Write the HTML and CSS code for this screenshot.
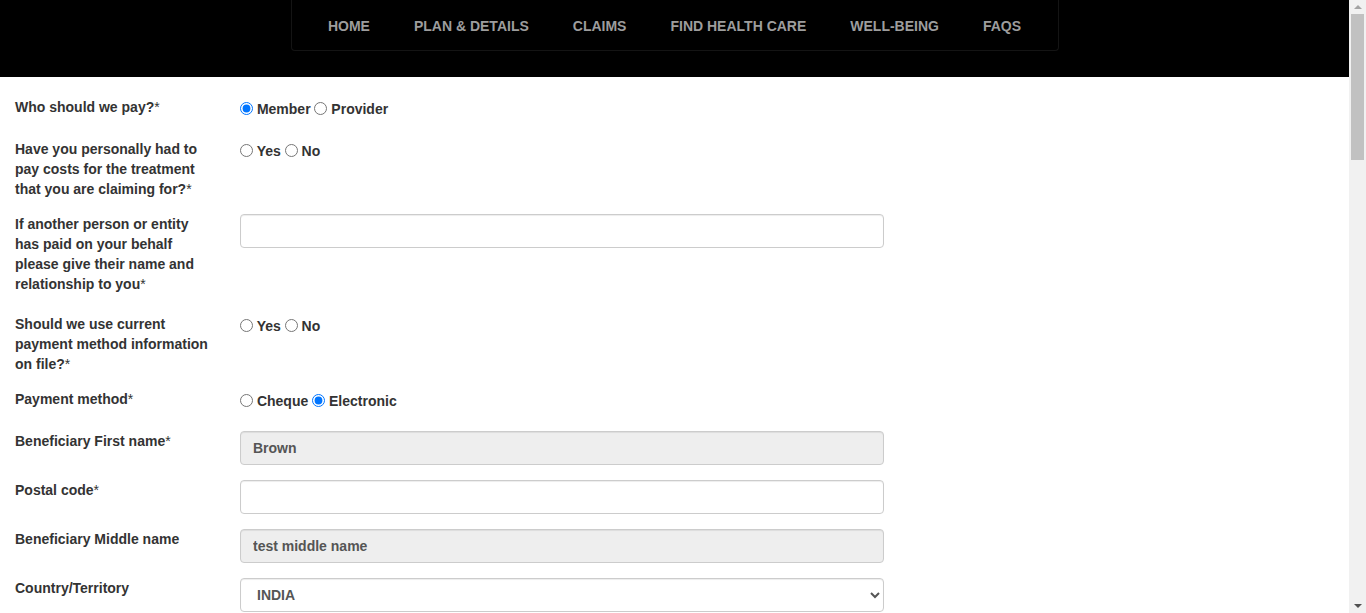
FILE: index.html
```html
<!DOCTYPE html>
<html lang="en">
<head>
<meta charset="utf-8">
<title>Claim form</title>
<link rel="stylesheet" href="styles.css">
</head>
<body>
<div class="page">
<header class="site-header">
  <nav class="navbar">
    <ul class="nav">
      <li><a href="#">HOME</a></li>
      <li><a href="#">PLAN &amp; DETAILS</a></li>
      <li><a href="#">CLAIMS</a></li>
      <li><a href="#">FIND HEALTH CARE</a></li>
      <li><a href="#">WELL-BEING</a></li>
      <li><a href="#">FAQS</a></li>
    </ul>
  </nav>
</header>

<form class="claim-form">
  <div class="row">
    <label class="row-label">Who should we pay?<span class="req">*</span></label>
    <div class="field radios">
      <input type="radio" name="pay" id="pay-m" checked> <label for="pay-m">Member</label>
      <input type="radio" name="pay" id="pay-p"> <label for="pay-p">Provider</label>
    </div>
  </div>

  <div class="row">
    <label class="row-label">Have you personally had to pay costs for the treatment that you are claiming for?<span class="req">*</span></label>
    <div class="field radios">
      <input type="radio" name="costs" id="costs-y"> <label for="costs-y">Yes</label>
      <input type="radio" name="costs" id="costs-n"> <label for="costs-n">No</label>
    </div>
  </div>

  <div class="row row-wide">
    <label class="row-label">If another person or entity has paid on your behalf please give their name and relationship to you<span class="req">*</span></label>
    <div class="field">
      <input type="text" class="form-control">
    </div>
  </div>

  <div class="row">
    <label class="row-label">Should we use current payment method information on file?<span class="req">*</span></label>
    <div class="field radios">
      <input type="radio" name="current" id="cur-y"> <label for="cur-y">Yes</label>
      <input type="radio" name="current" id="cur-n"> <label for="cur-n">No</label>
    </div>
  </div>

  <div class="row">
    <label class="row-label">Payment method<span class="req">*</span></label>
    <div class="field radios">
      <input type="radio" name="method" id="m-c"> <label for="m-c">Cheque</label>
      <input type="radio" name="method" id="m-e" checked> <label for="m-e">Electronic</label>
    </div>
  </div>

  <div class="row">
    <label class="row-label">Beneficiary First name<span class="req">*</span></label>
    <div class="field">
      <input type="text" class="form-control" value="Brown" readonly>
    </div>
  </div>

  <div class="row">
    <label class="row-label">Postal code<span class="req">*</span></label>
    <div class="field">
      <input type="text" class="form-control">
    </div>
  </div>

  <div class="row">
    <label class="row-label">Beneficiary Middle name</label>
    <div class="field">
      <input type="text" class="form-control" value="test middle name" readonly>
    </div>
  </div>

  <div class="row">
    <label class="row-label">Country/Territory</label>
    <div class="field">
      <select class="form-control">
        <option>INDIA</option>
        <option>CANADA</option>
        <option>UNITED STATES</option>
      </select>
    </div>
  </div>

  <div class="row">
    <label class="row-label">Beneficiary Last name<span class="req">*</span></label>
    <div class="field"><input type="text" class="form-control" value="Smith" readonly></div>
  </div>
  <div class="row">
    <label class="row-label">Address line 1<span class="req">*</span></label>
    <div class="field"><input type="text" class="form-control"></div>
  </div>
  <div class="row">
    <label class="row-label">City<span class="req">*</span></label>
    <div class="field"><input type="text" class="form-control"></div>
  </div>
</form>
</div>

<div class="scrollbar" aria-hidden="true">
  <div class="sb-btn sb-up"><span class="tri-up"></span></div>
  <div class="sb-track"><div class="sb-thumb"></div></div>
  <div class="sb-btn sb-down"><span class="tri-down"></span></div>
</div>
</body>
</html>
```

FILE: styles.css
```css
html, body {
  margin: 0;
  padding: 0;
}

body {
  font-family: "Liberation Sans", Arial, Helvetica, sans-serif;
  font-size: 14px;
  line-height: 20px;
  color: #333;
  background: #fff;
}

.page {
  margin-right: 17px;
}

/* Header / navigation */
.site-header {
  background: #000;
  padding-bottom: 26px;
}

.navbar {
  width: 766px;
  margin: 0 auto;
  border: 1px solid #141414;
  border-top: 0;
  border-radius: 0 0 4px 4px;
  background: #000;
}

.nav {
  list-style: none;
  margin: 0;
  padding: 0;
  display: flex;
  justify-content: center;
}

.nav a {
  display: block;
  padding: 16px 22px 14px;
  line-height: 20px;
  font-size: 14px;
  font-weight: bold;
  color: #9d9d9d;
  text-decoration: none;
}

/* Form */
.claim-form {
  padding-top: 20px;
  padding-bottom: 40px;
}

.row {
  display: flex;
  align-items: flex-start;
  margin-bottom: 15px;
}

.row-wide {
  margin-bottom: 20px;
}

.row-label {
  flex: none;
  width: 195px;
  padding: 0 15px;
  font-weight: bold;
  line-height: 20px;
}

.req {
  font-weight: normal;
}

.field {
  flex: none;
  width: 644px;
  padding: 0 15px;
}

.radios {
  min-height: 27px;
  padding-top: 2px;
  box-sizing: border-box;
  font-weight: bold;
  line-height: 20px;
}

.radios input[type="radio"] {
  width: 13px;
  height: 13px;
  margin: 0;
  vertical-align: -1px;
}

.radios label {
  cursor: pointer;
}

.form-control {
  display: block;
  box-sizing: border-box;
  width: 100%;
  height: 34px;
  padding: 6px 12px;
  font-family: "Liberation Sans", Arial, Helvetica, sans-serif;
  font-size: 14px;
  font-weight: bold;
  line-height: 20px;
  color: #555;
  background: #fff;
  border: 1px solid #ccc;
  border-radius: 4px;
  box-shadow: inset 0 1px 1px rgba(0, 0, 0, 0.075);
  outline: none;
}

.form-control[readonly] {
  background: #eee;
}

select.form-control {
  padding: 6px 12px;
}

/* Window scrollbar drawn over the page edge */
.scrollbar {
  position: fixed;
  top: 0;
  right: 0;
  bottom: 0;
  width: 17px;
  background: #f1f1f1;
  display: flex;
  flex-direction: column;
}

.sb-btn {
  flex: none;
  height: 14px;
  display: flex;
  align-items: center;
  justify-content: center;
}

.tri-up {
  width: 0;
  height: 0;
  border-left: 4px solid transparent;
  border-right: 4px solid transparent;
  border-bottom: 4px solid #a3a3a3;
}

.tri-down {
  width: 0;
  height: 0;
  border-left: 4px solid transparent;
  border-right: 4px solid transparent;
  border-top: 4px solid #505050;
}

.sb-track {
  flex: 1;
  padding: 0 2px;
}

.sb-thumb {
  height: 146px;
  background: #c1c1c1;
}
```
